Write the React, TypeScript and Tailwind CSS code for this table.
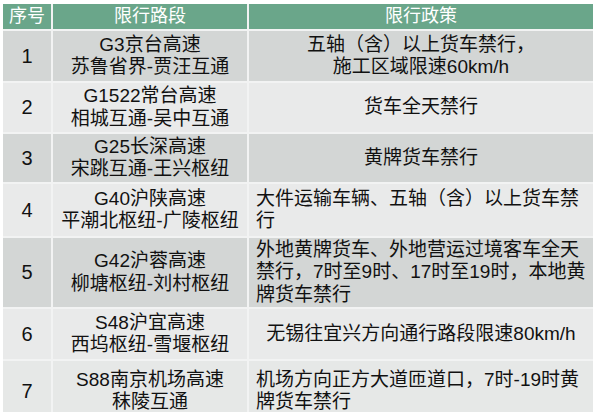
import React from 'react';

type Row = {
  no: string;
  road: [string, string];
  policy: string[];
  align: 'center' | 'left';
  h: string;
  bg: string;
};

const rows: Row[] = [
  { no: '1', road: ['G3京台高速', '苏鲁省界-贾汪互通'], policy: ['五轴（含）以上货车禁行，', '施工区域限速60km/h'], align: 'center', h: 'h-[50px]', bg: 'bg-[#d3d6d5]' },
  { no: '2', road: ['G1522常台高速', '相城互通-吴中互通'], policy: ['货车全天禁行'], align: 'center', h: 'h-[49px]', bg: 'bg-[#e9eaea]' },
  { no: '3', road: ['G25长深高速', '宋跳互通-王兴枢纽'], policy: ['黄牌货车禁行'], align: 'center', h: 'h-[48px]', bg: 'bg-[#d3d6d5]' },
  { no: '4', road: ['G40沪陕高速', '平潮北枢纽-广陵枢纽'], policy: ['大件运输车辆、五轴（含）以上货车禁', '行'], align: 'left', h: 'h-[52px]', bg: 'bg-[#e9eaea]' },
  { no: '5', road: ['G42沪蓉高速', '柳塘枢纽-刘村枢纽'], policy: ['外地黄牌货车、外地营运过境客车全天', '禁行，7时至9时、17时至19时，本地黄', '牌货车禁行'], align: 'left', h: 'h-[69px]', bg: 'bg-[#d3d6d5]' },
  { no: '6', road: ['S48沪宜高速', '西坞枢纽-雪堰枢纽'], policy: ['无锡往宜兴方向通行路段限速80km/h'], align: 'center', h: 'h-[50px]', bg: 'bg-[#e9eaea]' },
  { no: '7', road: ['S88南京机场高速', '秣陵互通'], policy: ['机场方向正方大道匝道口，7时-19时黄', '牌货车禁行'], align: 'left', h: 'h-[60px]', bg: 'bg-[#e6e8e7]' },
];

export default function App() {
  return (
    <div className="w-[600px] h-[412px] overflow-hidden bg-white pt-[4px] pl-[3px] font-['Liberation_Sans','Noto_Sans_CJK_SC',sans-serif] text-[#111]">
      <div className="w-[590px] bg-[#f2f3f3] flex flex-col gap-[2px]">
        <div className="grid grid-cols-[48px_194px_1fr] gap-[2px] h-[25px] text-white text-[18px] leading-[25px] text-center">
          <div className="bg-[#6aa68a]">序号</div>
          <div className="bg-[#6aa68a]">限行路段</div>
          <div className="bg-[#6aa68a]">限行政策</div>
        </div>
        {rows.map((r) => (
          <div key={r.no} className={`grid grid-cols-[48px_194px_1fr] gap-[2px] ${r.h} text-[19px] leading-[22.5px]`}>
            <div className={`${r.bg} flex items-center justify-center text-[20px]`}>{r.no}</div>
            <div className={`${r.bg} flex flex-col items-center justify-center text-center`}>
              <span>{r.road[0]}</span>
              <span>{r.road[1]}</span>
            </div>
            <div
              className={`${r.bg} flex flex-col justify-center whitespace-nowrap ${
                r.align === 'center' ? 'items-center text-center' : 'items-start text-left pl-[7px]'
              }`}
            >
              {r.policy.map((p, i) => (
                <span key={i}>{p}</span>
              ))}
            </div>
          </div>
        ))}
      </div>
    </div>
  );
}
